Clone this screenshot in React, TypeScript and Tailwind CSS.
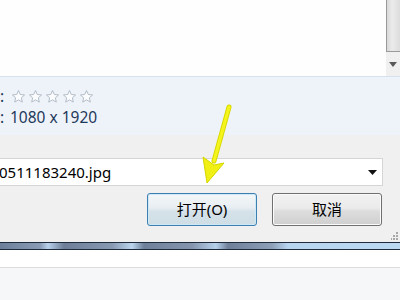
const Star = () => (
  <svg width="15" height="15" viewBox="0 0 24 24" className="shrink-0">
    <path
      d="M12 2.5l2.9 6.3 6.8.7-5.1 4.6 1.5 6.8L12 17.4l-6.1 3.5 1.5-6.8-5.1-4.6 6.8-.7z"
      fill="#fbfcfe"
      stroke="#a9b3bf"
      strokeWidth="1.4"
      strokeLinejoin="round"
    />
  </svg>
);

const App = () => {
  return (
    <div className="relative w-[400px] h-[300px] overflow-hidden flex flex-col bg-[#f0f0f0] font-['Noto_Sans','Noto_Sans_CJK_SC',sans-serif]">
      {/* file list */}
      <div className="h-[77px] shrink-0 flex bg-[#fefefe] border-b border-[#d9e2ec]">
        <div className="flex-1" />
        <div className="w-[14px] flex flex-col bg-[#e8e8e8]">
          <div className="h-[52px] border-l border-b border-[#9a9a9a] bg-[linear-gradient(to_right,#d8d8d8,#ebebeb_40%,#dcdcdc)]" />
          <div className="flex-1 flex items-center justify-center bg-[#f0f0f0]">
            <svg width="8" height="5" viewBox="0 0 8 5">
              <path d="M0 0h8L4 5z" fill="#5a5a5a" />
            </svg>
          </div>
        </div>
      </div>

      {/* details */}
      <div className="h-[58px] shrink-0 bg-[#eef3fa] pt-[9px] text-[15.5px] text-[#1e395b]">
        <div className="h-[21px] flex items-center">
          <span className="w-[11px] leading-none">:</span>
          <div className="flex gap-[2px]">
            <Star />
            <Star />
            <Star />
            <Star />
            <Star />
          </div>
        </div>
        <div className="h-[21px] flex items-center">
          <span className="w-[10px]">:</span>
          <span>1080 x 1920</span>
        </div>
      </div>

      {/* file name + buttons */}
      <div className="h-[107px] shrink-0 pt-[23px] pr-[17px]">
        <div className="h-[28px] flex items-center bg-white border border-l-0 border-[#d5d5d5] text-[15px] text-black">
          <span className="flex-1 -ml-[1px]">0511183240.jpg</span>
          <svg width="9" height="5" viewBox="0 0 9 5" className="mr-[5px]">
            <path d="M0 0h9L4.5 5z" fill="#111" />
          </svg>
        </div>
        <div className="mt-[7px] flex justify-end gap-[15px] pr-[1px]">
          <button className="w-[110px] h-[33px] rounded-[3px] border border-[#3c7fb1] bg-[linear-gradient(to_bottom,#f4f7f9,#e7eef2_45%,#d5e2e9_55%,#cfdde5)] text-[15px] text-black shadow-[inset_0_0_0_1px_#cde8f7]">
            打开(O)
          </button>
          <button className="w-[110px] h-[33px] rounded-[3px] border border-[#707070] bg-[linear-gradient(to_bottom,#f2f2f2,#ebebeb_45%,#dddddd_55%,#cfcfcf)] text-[15px] text-black shadow-[inset_0_0_0_1px_#fbfbfb]">
            取消
          </button>
        </div>
      </div>

      {/* taskbar stripe */}
      <div className="h-[8px] shrink-0 border-t border-b border-[#1d2b3a] bg-[linear-gradient(to_right,#6c7f9a,#8a9cb5_10%,#b9d2ec_12%,#6e7e98_16%,#8899b2_28%,#bcd6ee_33%,#6f809a_36%,#8595ae_48%,#b7d2ec_54%,#6f809a_57%,#8da0b8_68%,#b8d5f0_72%,#bcd9f2)]" />
      <div className="h-[18px] shrink-0 bg-white border-b border-[#dcdcdc]" />
      <div className="flex-1 bg-[#f6f7f9]" />

      {/* resize grip */}
      <svg width="8" height="8" viewBox="0 0 8 8" className="absolute left-[391px] top-[232px]">
        <rect x="5" y="0" width="2" height="2" fill="#a8a8a8" />
        <rect x="2" y="3" width="2" height="2" fill="#a8a8a8" />
        <rect x="5" y="3" width="2" height="2" fill="#a8a8a8" />
        <rect x="-1" y="6" width="2" height="2" fill="#a8a8a8" />
        <rect x="2" y="6" width="2" height="2" fill="#a8a8a8" />
        <rect x="5" y="6" width="2" height="2" fill="#a8a8a8" />
      </svg>

      {/* yellow arrow */}
      <svg width="40" height="84" viewBox="0 0 40 84" className="absolute left-[195px] top-[103px]">
        <path d="M34 4 L19 58" stroke="#d9d900" strokeWidth="5" strokeLinecap="round" />
        <path d="M34 4 L19 58" stroke="#f5f51e" strokeWidth="3" strokeLinecap="round" />
        <path d="M8 54 L12 80 L29 60 L19 62 Z" fill="#f0f014" stroke="#d6d600" strokeWidth="1" strokeLinejoin="round" />
      </svg>
    </div>
  );
};

export default App;
